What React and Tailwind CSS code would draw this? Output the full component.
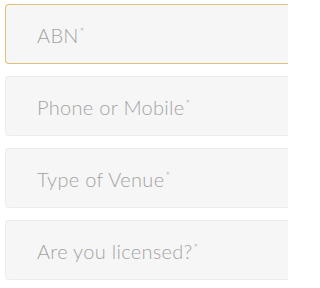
import React from 'react'

const fields = ['ABN', 'Phone or Mobile', 'Type of Venue', 'Are you licensed?']

export default function App(){
  return (
    <div className="w-[288px] h-[288px] overflow-hidden bg-white pt-[4px] pl-[5px]" style={{fontFamily: '"Lato", "Open Sans", sans-serif'}}>
      <div className="flex flex-col gap-[12px] w-[288px]">
        {fields.map((f, i) => (
          <div key={f} className={'h-[60px] rounded-l-[4px] border border-r-0 bg-[#f6f6f6] flex items-center pl-[31px] pt-[1px] ' + (i === 0 ? 'border-[#dcc27a]' : 'border-[#ededed]')}>
            <span className="text-[20px] text-[#a3a3a3] font-light tracking-[0.3px]">
              {f}<span className="text-[11px] align-[7px] ml-[1px]">*</span>
            </span>
          </div>
        ))}
      </div>
    </div>
  )
}
